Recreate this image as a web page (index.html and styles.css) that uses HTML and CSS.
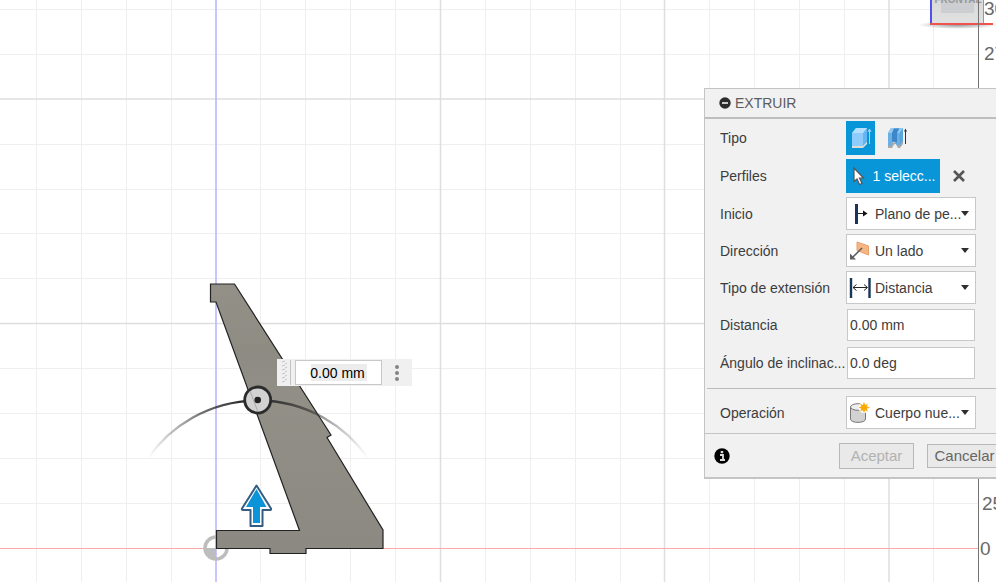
FILE: index.html
```html
<!DOCTYPE html>
<html lang="es">
<head>
<meta charset="utf-8">
<title>Extruir</title>
<meta name="viewport" content="width=device-width, initial-scale=1">
<link rel="stylesheet" href="styles.css">
</head>
<body>
<main class="viewport">
  <svg class="scene" aria-hidden="true">
    <defs>
      <linearGradient id="arcFade" gradientUnits="userSpaceOnUse" x1="148" y1="0" x2="368" y2="0">
        <stop offset="0" stop-color="#222" stop-opacity="0"/>
        <stop offset=".25" stop-color="#222" stop-opacity=".65"/>
        <stop offset=".45" stop-color="#222"/>
        <stop offset=".55" stop-color="#333"/>
        <stop offset=".75" stop-color="#333" stop-opacity=".6"/>
        <stop offset="1" stop-color="#333" stop-opacity="0"/>
      </linearGradient>
      <linearGradient id="body" x1="0" y1="0" x2="0" y2="1">
        <stop offset="0" stop-color="#949088"/>
        <stop offset=".25" stop-color="#8d8c83"/>
        <stop offset=".45" stop-color="#928f87"/>
        <stop offset="1" stop-color="#8c8982"/>
      </linearGradient>
      <linearGradient id="cube" x1="0" y1="0" x2="0" y2="1">
        <stop offset="0" stop-color="#d0d0d2"/>
        <stop offset="1" stop-color="#e1e1e1"/>
      </linearGradient>
      <radialGradient id="shade">
        <stop offset="0" stop-color="#000" stop-opacity=".4"/>
        <stop offset="1" stop-color="#000" stop-opacity="0"/>
      </radialGradient>
    </defs>

    <!-- grid -->
    <path class="minor" d="M36.5 0v2000M81.5 0v2000M126.5 0v2000M171.5 0v2000M260.5 0v2000M305.5 0v2000M350.5 0v2000M395.5 0v2000M485.5 0v2000M530.5 0v2000M575.5 0v2000M620.5 0v2000M709.5 0v2000M754.5 0v2000M799.5 0v2000M844.5 0v2000M933.5 0v2000"/>
    <path class="minor" d="M0 9.500H978M0 54.500H978M0 144.500H978M0 189.500H978M0 233.500H978M0 278.500H978M0 368.500H978M0 413.500H978M0 458.500H978M0 503.500H978"/>
    <path class="major" d="M440.500 0v2000M889 0v2000M664.500 0v2000M0 99H978M0 323.500H978"/>
    <path d="M216 0V2000" stroke="#bcb8ff" stroke-width="1.600"/>
    <path d="M0 548.500H978" stroke="#fbaaaa" stroke-width="1"/>

    <!-- origin -->
    <circle cx="216" cy="548" r="11" fill="none" stroke="#bdbdbd" stroke-width="3.500"/>
    <path d="M216 548V560A12 12 0 0 1 204 548Z" fill="#bdbdbd"/>

    <!-- profile -->
    <path d="M210.500 284H234.500L331 435L327 437.500L383 530V548.500H306V553.500H270V548.500H216.500V530.500H299.500L216 302H210.500Z" fill="url(#body)" stroke="#222" stroke-width="1.200"/>

    <!-- angle handle -->
    <path d="M148 458A134 134 0 0 1 368 458" fill="none" stroke="url(#arcFade)" stroke-width="2.300"/>
    <circle cx="257.700" cy="400" r="13" fill="#d2d2d2" stroke="#2b2b2b" stroke-width="2.800"/>
    <path d="M250 391L258 412" stroke="#aaa"/>
    <circle cx="257.700" cy="400" r="3.300" fill="#222"/>

    <!-- distance arrow -->
    <path d="M256.500 485.500L271 508.500Q271.500 510 270 510H262.500V526H250.500V510H243Q241.500 510 242 508.500Z" fill="#fff" stroke="#355c82" stroke-width="2" stroke-linejoin="round"/>
    <path d="M256.500 489L266.500 507H260V523H253V507H246Z" fill="#0b94d8"/>

    <!-- view cube -->
    <ellipse cx="958" cy="25" rx="40" ry="4" fill="url(#shade)"/>
    <rect x="931" y="-26" width="53" height="49" fill="url(#cube)"/>
    <rect x="941" y="-10" width="33" height="23" fill="#cdced1"/>
    <text x="958" y="3" class="cube-label">FRONTAL</text>
    <path d="M983.500 0V23" stroke="#999"/>
    <path d="M931 0V24" stroke="#5050ee" stroke-width="2"/>
    <path d="M930 24H993" stroke="#ef5350" stroke-width="2"/>

    <!-- ruler -->
    <path d="M978.500 0V2000" stroke="#737373"/>
    <g class="ruler">
      <text x="984" y="15">300</text>
      <text x="984" y="60">275</text>
      <text x="982" y="510">25</text>
      <text x="980" y="555">0</text>
    </g>
  </svg>

  <div class="value-box">
    <svg class="grip" width="18" height="27" aria-hidden="true">
      <path d="M5 3l3-1M5 7l3-1M5 11l3-1M5 15l3-1M5 19l3-1M5 23l3-1M8 5l2-1M8 9l2-1M8 13l2-1M8 17l2-1M8 21l2-1" stroke="#c4c4c4"/>
      <path d="M13.500 1v25" stroke="#c4c4c4"/>
    </svg>
    <input class="value-input" type="text" value="0.00 mm" aria-label="Distancia">
    <button class="more" type="button" aria-label="Más opciones">
      <svg width="6" height="18" fill="#858585"><circle cx="3" cy="3" r="2"/><circle cx="3" cy="9" r="2"/><circle cx="3" cy="15" r="2"/></svg>
    </button>
  </div>

  <form class="panel">
    <header class="panel-head">
      <svg width="12" height="12"><circle cx="6" cy="6" r="5.700" fill="#2c2c2c"/><path d="M3 6h6" stroke="#ddd" stroke-width="1.800"/></svg>
      <span>EXTRUIR</span>
    </header>

    <div class="fields">
      <div class="row">
        <span class="label">Tipo</span>
        <div class="tools">
          <button class="tool tool-on" type="button" aria-label="Extruir">
            <svg width="22" height="22">
              <path d="M2 18.500V21H13L17 17V14.500L13 18.500Z" fill="#e0ddd8"/>
              <path d="M2 6L6 1H17V14L13 19H2Z" fill="#63b5f3"/>
              <path d="M2 6H13V19H2Z" fill="#8dccfb"/>
              <path d="M2 6L6 1H17L13 6Z" fill="#b6e0ff"/>
              <path d="M19.500 17V3M18 5l1.500-3L21 5" stroke="#a7d5f2" fill="none"/>
            </svg>
          </button>
          <button class="tool" type="button" aria-label="Extrusión fina">
            <svg width="22" height="22">
              <path d="M2 17V21H6L8 17.500L10 17L12 21H14L17 17V13Z" fill="#a9a9a9"/>
              <path d="M2 6L5 1H17V14L13.500 18.500H11L9 15H7L5 18.500H2Z" fill="#5ba4dd"/>
              <path d="M6 4L8 2H14L12 5V16L9 14.500H6Z" fill="#3d86c8"/>
              <path d="M2 6H6V17L5 18.500H2ZM11 6H13.500V18.500H11Z" fill="#6bb0e4"/>
              <path d="M2 6L5 1H8L6 6ZM11 6L13.500 1H17L13.500 6Z" fill="#92c9f2"/>
              <path d="M19.500 17V3" stroke="#333"/><path d="M18 4.500l1.500-3 1.500 3Z" fill="#333"/>
            </svg>
          </button>
        </div>
      </div>

      <div class="row">
        <span class="label">Perfiles</span>
        <div class="tools">
          <button class="picker" type="button">
            <svg width="14" height="20"><path d="M2 2V15.500L5 13L7.500 18.500L10 17.500L7.500 12H11.500Z" fill="#fff" stroke="#555" stroke-width="1.200"/></svg>
            <span>1 selecc...</span>
          </button>
          <button class="clear" type="button" aria-label="Borrar selección">
            <svg width="12" height="12"><path d="M1 1l10 10M11 1l-10 10" stroke="#555" stroke-width="2.600"/></svg>
          </button>
        </div>
      </div>

      <div class="row">
        <label class="label" for="inicio">Inicio</label>
        <div class="choice">
          <svg class="icon" width="22" height="22"><path d="M7.500 1V21" stroke="#193558" stroke-width="3"/><path d="M9 10.500H15" stroke="#222"/><path d="M14 7.500l4.500 3-4.500 3Z" fill="#111"/></svg>
          <select id="inicio"><option>Plano de pe...</option></select>
        </div>
      </div>

      <div class="row">
        <label class="label" for="direccion">Dirección</label>
        <div class="choice">
          <svg class="icon" width="22" height="22"><path d="M8 2L19.500 6V15L8 10.500Z" fill="#f6b584" stroke="#e99f68"/><path d="M13 8L4 17" stroke="#5f5f5f" stroke-width="1.600"/><path d="M1 19.500V13.500L7 19.500Z" fill="#5f5f5f"/></svg>
          <select id="direccion"><option>Un lado</option></select>
        </div>
      </div>

      <div class="row">
        <label class="label" for="extension">Tipo de extensión</label>
        <div class="choice">
          <svg class="icon" width="22" height="22"><path d="M2 1V21M20.500 1V21" stroke="#193558" stroke-width="2.400"/><path d="M4 10.500H18M7.500 7.500L4 10.500l3.500 3M15 7.500l3.500 3-3.500 3" stroke="#222" fill="none"/></svg>
          <select id="extension"><option>Distancia</option></select>
        </div>
      </div>

      <div class="row">
        <label class="label" for="distancia">Distancia</label>
        <input class="text" id="distancia" type="text" value="0.00 mm">
      </div>

      <div class="row">
        <label class="label" for="angulo">Ángulo de inclinac...</label>
        <input class="text" id="angulo" type="text" value="0.0 deg">
      </div>
    </div>

    <div class="fields fields-last">
      <div class="row">
        <label class="label" for="operacion">Operación</label>
        <div class="choice">
          <svg class="icon" width="22" height="22">
            <path d="M1.500 5V17C1.500 21.500 16.500 21.500 16.500 17V5" fill="#d2d2d2" stroke="#777"/>
            <ellipse cx="9" cy="5" rx="7.500" ry="3.300" fill="#eee" stroke="#777"/>
            <circle cx="15" cy="5.500" r="5.500" fill="#fff"/>
            <path d="M15 0l1.200 3L19 1.700 17.700 4.400 21 5.500 17.700 6.700 19 9.500 16.200 8.200 15 11 13.800 8.200 11 9.500 12.300 6.700 9.500 5.500 12.300 4.400 11 1.700 13.800 3Z" fill="#fba905"/>
          </svg>
          <select id="operacion"><option>Cuerpo nue...</option></select>
        </div>
      </div>
    </div>

    <footer class="panel-foot">
      <button class="info" type="button" aria-label="Información">
        <svg width="16" height="16"><circle cx="8" cy="8" r="7.700" fill="#000"/><path d="M6 7H9V12M6 12H11" stroke="#ddd" stroke-width="1.800" fill="none"/><path d="M6.700 3h2.500v2.200h-2.500Z" fill="#ddd"/></svg>
      </button>
      <button class="action action-ok" type="button" disabled>Aceptar</button>
      <button class="action" type="button">Cancelar</button>
    </footer>
  </form>
</main>
</body>
</html>
```

FILE: styles.css
```css
* {
  box-sizing: border-box;
}

body {
  margin: 0;
  background: #fff;
  color: #3c3c3c;
  font: 14px/16px "Liberation Sans", Arial, sans-serif;
}

button,
input,
select {
  margin: 0;
  font: inherit;
  color: inherit;
  border-radius: 0;
}

svg {
  display: block;
  flex: none;
}

.viewport {
  position: relative;
  min-height: 100vh;
  overflow: hidden;
}

/* Drawing area */
.scene {
  position: absolute;
  inset: 0;
  width: 100%;
  height: 100%;
}

.minor {
  stroke: #efefef;
}

.major {
  stroke: #dedede;
  stroke-width: 1.500;
}

.cube-label {
  font-size: 10px;
  font-weight: bold;
  fill: #96989c;
  text-anchor: middle;
}

.ruler {
  font-size: 19px;
  fill: #696969;
}

/* Value box on the canvas */
.value-box {
  position: absolute;
  left: 277px;
  top: 359px;
  display: flex;
  align-items: center;
  height: 27px;
  background: #f0f0f0;
}

.value-input {
  width: 87px;
  height: 25px;
  padding: 0 2px 0 0;
  border: 1px solid #c8c8c8;
  background: linear-gradient(#ececec, #ececec) center / 56px 17px no-repeat #fff;
  color: #000;
  text-align: center;
}

.more {
  display: flex;
  justify-content: center;
  width: 30px;
  padding: 0;
  border: 0;
  background: none;
}

/* Command panel, running past the right edge of the window */
.panel {
  position: absolute;
  top: 88px;
  right: -16px;
  width: 308px;
  border: 1px solid #c4c4c4;
  border-bottom-width: 2px;
  background: #f1f1f1;
}

.panel-head {
  display: flex;
  align-items: center;
  gap: 4px;
  height: 30px;
  padding: 0 14px;
  border-bottom: 2px solid #bebebe;
  color: #5c5c5c;
}

.fields {
  display: grid;
  gap: 4px;
  margin-left: 2px;
  padding: 2px 0 8px 13px;
}

.fields-last {
  padding-top: 7px;
  padding-bottom: 4px;
  border-top: 1px solid #bcbcbc;
}

.row {
  display: grid;
  grid-template-columns: 118px 130px;
  column-gap: 8px;
  align-items: center;
}

.label {
  white-space: nowrap;
}

.tools {
  display: flex;
  align-items: center;
  gap: 7px;
}

.tool,
.picker,
.clear {
  display: flex;
  align-items: center;
  justify-content: center;
  height: 34px;
  padding: 0;
  border: 0;
  background: none;
}

.tool {
  width: 29px;
}

.tool-on,
.picker {
  background: #0896d8;
}

.picker {
  width: 94px;
  gap: 6px;
  padding-left: 2px;
  color: #fff;
  white-space: nowrap;
}

.clear {
  width: 24px;
}

.choice {
  position: relative;
}

.icon {
  position: absolute;
  left: 3px;
  top: 6px;
  pointer-events: none;
}

select {
  display: block;
  appearance: none;
  width: 100%;
  height: 33px;
  padding: 0 0 0 28px;
  border: 1px solid #c8c8c8;
  background: #fff;
}

.choice::after {
  content: "";
  position: absolute;
  right: 7px;
  top: 14px;
  border: 4px solid transparent;
  border-top: 5px solid #2e2e2e;
  border-bottom: 0;
  pointer-events: none;
}

.text {
  width: 128px;
  height: 32px;
  margin: 1px 0 1px 1px;
  padding: 0 2px;
  border: 1px solid #c8c8c8;
  background: #fff;
}

.panel-foot {
  display: flex;
  align-items: center;
  gap: 13px;
  height: 44px;
  padding: 0 9px;
  border-top: 1px solid #c4c4c4;
}

.info {
  margin-right: auto;
  padding: 0;
  border: 0;
  background: none;
}

.action {
  width: 75px;
  height: 24px;
  padding: 0;
  border: 1px solid #b8b8b8;
  background: #e9e9e9;
  color: #666;
  font-size: 15px;
}

.action-ok {
  height: 26px;
  color: #b2b2b2;
}
```
